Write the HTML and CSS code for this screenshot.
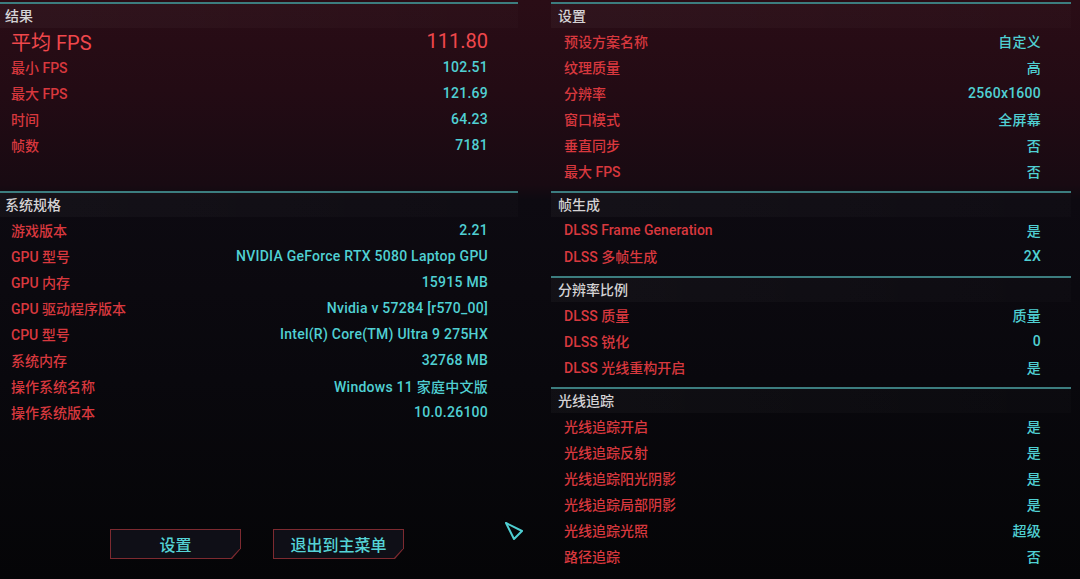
FILE: index.html
```html
<!DOCTYPE html>
<html lang="zh-CN">
  <head>
    <meta charset="UTF-8" />
    <meta name="viewport" content="width=device-width, initial-scale=1.0" />
    <title>基准测试结果</title>
    <link rel="stylesheet" href="styles.css">
  </head>
  <body>
    <div class="screen">
      <div class="col col-left">
        <section class="group results">
          <div class="group-title">结果</div>
          <div class="row row-main"><span class="label">平均 FPS</span><span class="value">111.80</span></div>
          <div class="row"><span class="label">最小 FPS</span><span class="value">102.51</span></div>
          <div class="row"><span class="label">最大 FPS</span><span class="value">121.69</span></div>
          <div class="row"><span class="label">时间</span><span class="value">64.23</span></div>
          <div class="row"><span class="label">帧数</span><span class="value">7181</span></div>
        </section>

        <section class="group">
          <div class="group-title">系统规格</div>
          <div class="row"><span class="label">游戏版本</span><span class="value">2.21</span></div>
          <div class="row"><span class="label">GPU 型号</span><span class="value">NVIDIA GeForce RTX 5080 Laptop GPU</span></div>
          <div class="row"><span class="label">GPU 内存</span><span class="value">15915 MB</span></div>
          <div class="row"><span class="label">GPU 驱动程序版本</span><span class="value">Nvidia v 57284 [r570_00]</span></div>
          <div class="row"><span class="label">CPU 型号</span><span class="value">Intel(R) Core(TM) Ultra 9 275HX</span></div>
          <div class="row"><span class="label">系统内存</span><span class="value">32768 MB</span></div>
          <div class="row"><span class="label">操作系统名称</span><span class="value">Windows 11 家庭中文版</span></div>
          <div class="row"><span class="label">操作系统版本</span><span class="value">10.0.26100</span></div>
        </section>

        <div class="actions">
          <button class="btn"><span>设置</span></button>
          <button class="btn"><span>退出到主菜单</span></button>
        </div>
      </div>

      <div class="col col-right">
        <section class="group">
          <div class="group-title">设置</div>
          <div class="row"><span class="label">预设方案名称</span><span class="value">自定义</span></div>
          <div class="row"><span class="label">纹理质量</span><span class="value">高</span></div>
          <div class="row"><span class="label">分辨率</span><span class="value">2560x1600</span></div>
          <div class="row"><span class="label">窗口模式</span><span class="value">全屏幕</span></div>
          <div class="row"><span class="label">垂直同步</span><span class="value">否</span></div>
          <div class="row"><span class="label">最大 FPS</span><span class="value">否</span></div>
        </section>

        <section class="group">
          <div class="group-title">帧生成</div>
          <div class="row"><span class="label">DLSS Frame Generation</span><span class="value">是</span></div>
          <div class="row"><span class="label">DLSS 多帧生成</span><span class="value">2X</span></div>
        </section>

        <section class="group">
          <div class="group-title">分辨率比例</div>
          <div class="row"><span class="label">DLSS 质量</span><span class="value">质量</span></div>
          <div class="row"><span class="label">DLSS 锐化</span><span class="value">0</span></div>
          <div class="row"><span class="label">DLSS 光线重构开启</span><span class="value">是</span></div>
        </section>

        <section class="group">
          <div class="group-title">光线追踪</div>
          <div class="row"><span class="label">光线追踪开启</span><span class="value">是</span></div>
          <div class="row"><span class="label">光线追踪反射</span><span class="value">是</span></div>
          <div class="row"><span class="label">光线追踪阳光阴影</span><span class="value">是</span></div>
          <div class="row"><span class="label">光线追踪局部阴影</span><span class="value">是</span></div>
          <div class="row"><span class="label">光线追踪光照</span><span class="value">超级</span></div>
          <div class="row"><span class="label">路径追踪</span><span class="value">否</span></div>
        </section>
      </div>

      <!-- mouse pointer -->
      <svg class="cursor" width="24" height="24" viewBox="0 0 24 24">
        <polygon points="3,3 19,11 11,19" fill="none" stroke="#4fcfd2" stroke-width="2" stroke-linejoin="round" />
      </svg>
    </div>
  </body>
</html>
```

FILE: styles.css
```css
body {
  margin: 0;
  width: 1080px;
  height: 579px;
  overflow: hidden;
  font-family: Roboto, "Noto Sans CJK SC", sans-serif;
  background: linear-gradient(
    180deg,
    #2a0d16 0,
    #230b14 90px,
    #180a12 185px,
    #0d0a11 200px,
    #09080d 380px,
    #050507 100%
  );
}

.screen {
  position: relative;
  display: flex;
  height: 579px;
  padding-top: 2px;
  box-sizing: border-box;
}

.col {
  display: flex;
  flex-direction: column;
}

.col-left {
  width: 518px;
  padding-bottom: 20px;
  box-sizing: border-box;
}

.col-right {
  width: 520px;
  margin-left: 33px;
}

.group {
  border-top: 2px solid #3c7d7f;
  padding-bottom: 7px;
}

.results {
  height: 189px;
  box-sizing: border-box;
}

.group-title {
  height: 24px;
  line-height: 24px;
  padding-left: 5px;
  font-size: 14px;
  font-weight: 500;
  color: #d4d2d4;
  background: linear-gradient(90deg, rgba(255, 255, 255, 0.03), rgba(255, 255, 255, 0.012));
}

.col-right .group-title {
  padding-left: 7px;
}

.row {
  display: flex;
  justify-content: space-between;
  align-items: center;
  height: 26px;
  padding: 0 30px 0 11px;
  font-size: 14px;
  font-weight: 500;
}

.col-right .row {
  padding-left: 13px;
}

.label {
  color: #d8383e;
}

.value {
  color: #50d0d3;
  letter-spacing: 0.25px;
}

.row-main .label,
.row-main .value {
  font-size: 20px;
  font-weight: 400;
  letter-spacing: 0;
  color: #f0474c;
}

.actions {
  display: flex;
  gap: 32px;
  margin-top: auto;
  padding-left: 110px;
}

.btn {
  width: 131px;
  height: 30px;
  padding: 1px;
  border: none;
  background: #7d2a30;
  clip-path: polygon(0 0, 100% 0, 100% 65%, calc(100% - 9px) 100%, 0 100%);
  cursor: pointer;
}

.btn span {
  display: flex;
  align-items: center;
  justify-content: center;
  height: 100%;
  background: #0f0f17;
  clip-path: polygon(0 0, 100% 0, 100% 65%, calc(100% - 9px) 100%, 0 100%);
  font-family: "Noto Sans CJK SC", sans-serif;
  font-size: 16px;
  font-weight: 500;
  color: #55d3d6;
}

.cursor {
  position: absolute;
  left: 503px;
  top: 520px;
}
```
